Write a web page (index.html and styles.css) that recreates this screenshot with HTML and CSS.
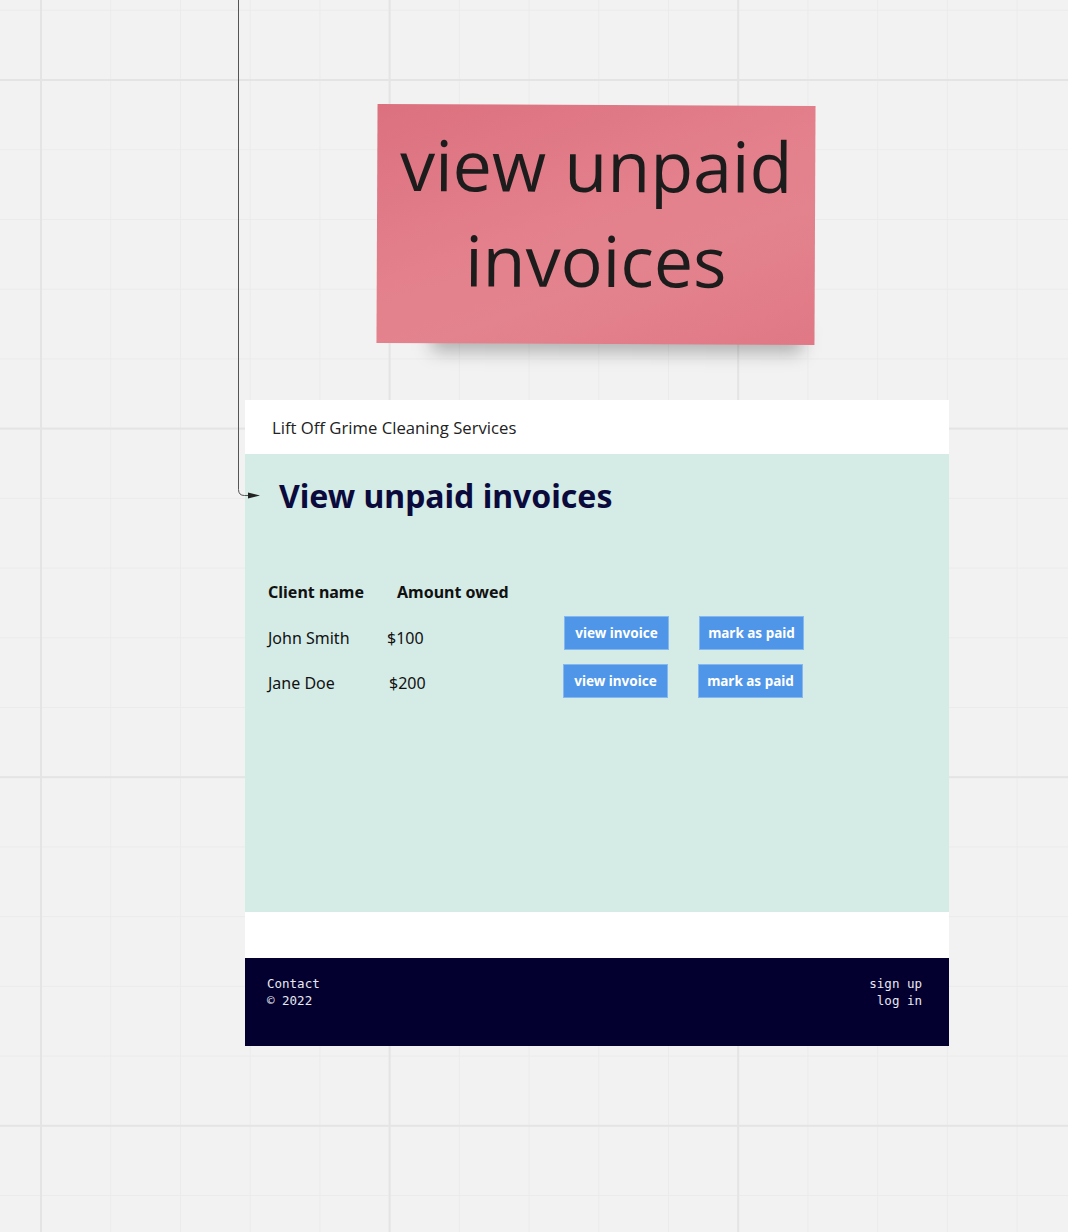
FILE: index.html
```html
<!DOCTYPE html>
<html lang="en">
<head>
<meta charset="utf-8">
<title>View unpaid invoices</title>
<link rel="stylesheet" href="styles.css">
</head>
<body>
<div class="canvas">
  <div class="note-wrap">
    <div class="note-shadow"></div>
    <div class="note">
      <p class="note-text">view unpaid invoices</p>
    </div>
  </div>

  <div class="frame">
    <header class="site-header">Lift Off Grime Cleaning Services</header>
    <main class="main">
      <h1 class="title">View unpaid invoices</h1>
      <div class="table">
        <div class="row head">
          <div class="c-name-h">Client name</div>
          <div class="c-amount-h">Amount owed</div>
        </div>
        <div class="row row1">
          <div class="c-name">John Smith</div>
          <div class="c-amount">$100</div>
          <button class="btn">view invoice</button>
          <button class="btn btn-mark">mark as paid</button>
        </div>
        <div class="row row2">
          <div class="c-name">Jane Doe</div>
          <div class="c-amount">$200</div>
          <button class="btn">view invoice</button>
          <button class="btn btn-mark">mark as paid</button>
        </div>
      </div>
    </main>
    <div class="strip"></div>
    <footer class="footer">
      <div class="f-left">
        <div>Contact</div>
        <div>© 2022</div>
      </div>
      <div class="f-right">
        <div>sign up</div>
        <div>log in</div>
      </div>
    </footer>
  </div>

  <svg class="connector" width="300" height="520" viewBox="0 0 300 520">
    <path d="M238.5 0 V489.5 Q238.5 495.5 244.5 495.5 H250" fill="none" stroke="#555" stroke-width="1"/>
    <polygon points="248,492.5 260,495.5 248,498.5" fill="#222"/>
  </svg>
</div>
</body>
</html>
```

FILE: styles.css
```css
html, body {
  margin: 0;
  padding: 0;
}

body {
  width: 1068px;
  height: 1232px;
  overflow: hidden;
  background-color: #f2f2f2;
  background-image:
    linear-gradient(to right, #e4e4e4 2px, transparent 2px),
    linear-gradient(to bottom, #e4e4e4 2px, transparent 2px),
    linear-gradient(to right, #ebebeb 1px, transparent 1px),
    linear-gradient(to bottom, #ebebeb 1px, transparent 1px);
  background-size:
    348.6px 100%,
    100% 348.6px,
    69.72px 100%,
    100% 69.72px;
  background-position:
    40px 0,
    0 79px,
    40.5px 0,
    0 79.5px;
  font-family: "Open Sans", "Liberation Sans", sans-serif;
}

.canvas {
  position: relative;
  width: 1068px;
  height: 1232px;
}

.connector {
  position: absolute;
  left: 0;
  top: 0;
}

/* sticky note */
.note-wrap {
  position: absolute;
  left: 377px;
  top: 105px;
  width: 438px;
  height: 239px;
  transform: rotate(0.26deg);
}

.note-shadow {
  position: absolute;
  left: 55px;
  right: 12px;
  bottom: -8px;
  height: 26px;
  background: rgba(0, 0, 0, 0.28);
  filter: blur(9px);
}

.note {
  position: relative;
  height: 100%;
  background: linear-gradient(160deg, #dc707e 0%, #e3808c 45%, #e3838e 65%, #e07885 100%);
  box-sizing: border-box;
  padding-top: 13px;
}

.note-text {
  margin: 0 auto;
  width: 400px;
  text-align: center;
  font-family: "Open Sans", sans-serif;
  font-size: 70px;
  line-height: 95px;
  color: #1c1c1c;
}

/* mockup frame */
.frame {
  position: absolute;
  left: 245px;
  top: 400px;
  width: 704px;
  background: #ffffff;
}

.site-header {
  height: 54px;
  display: flex;
  align-items: center;
  padding-left: 27px;
  font-family: "Open Sans", sans-serif;
  font-size: 16.7px;
  color: #222222;
}

.main {
  height: 458px;
  background: #d4ebe6;
  box-sizing: border-box;
  padding: 22px 0 0 23px;
  font-family: "Noto Sans", "Open Sans", sans-serif;
}

.title {
  margin: 0 0 53px 11px;
  font-family: "Noto Sans", sans-serif;
  font-weight: 700;
  font-size: 32px;
  line-height: 40px;
  color: #0b0a3c;
}

.row {
  display: flex;
  align-items: center;
  height: 46px;
  font-size: 16px;
  color: #111111;
}

.row1 {
  height: 45px;
}

.head {
  font-weight: 700;
}

.c-name-h {
  width: 129px;
}

.c-name {
  width: 119px;
}

.c-amount {
  width: 177px;
}

.row2 .c-amount {
  padding-left: 2px;
  width: 174px;
}

.btn {
  width: 105px;
  height: 34px;
  padding: 0;
  border: 1px solid #86b8f0;
  background: #4f96e8;
  color: #ffffff;
  font-family: "Noto Sans", sans-serif;
  font-weight: 700;
  font-size: 13.5px;
}

.row1 .btn {
  margin-bottom: 10px;
}

.row2 .btn {
  margin-bottom: 4px;
}

.btn-mark {
  margin-left: 30px;
}

.strip {
  height: 46px;
}

.footer {
  height: 88px;
  box-sizing: border-box;
  background: #03002f;
  display: flex;
  justify-content: space-between;
  padding: 17px 27px 0 22px;
  font-family: "DejaVu Sans Mono", monospace;
  font-size: 12.5px;
  line-height: 17px;
  color: #e8e8f0;
}

.f-right {
  text-align: right;
}
```
